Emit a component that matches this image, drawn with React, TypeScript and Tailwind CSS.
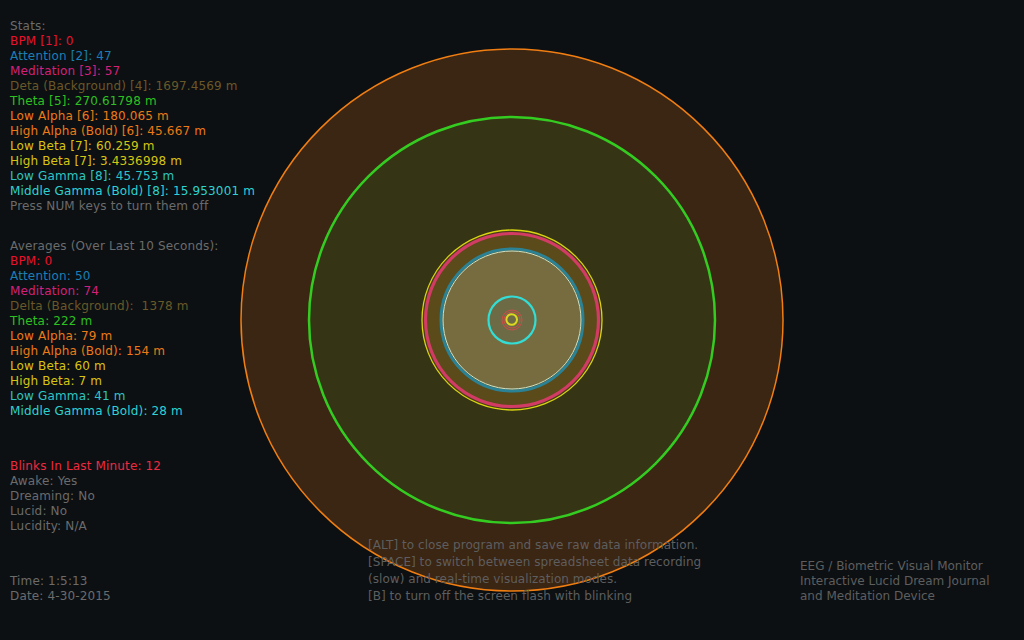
const lineFont = { fontFamily: '"DejaVu Sans", Verdana, sans-serif' };

type Line = { text: string; color: string };

const stats: Line[] = [
  { text: 'Stats:', color: 'text-[#6b6b6b]' },
  { text: 'BPM [1]: 0', color: 'text-[#e8102c]' },
  { text: 'Attention [2]: 47', color: 'text-[#1a7fb4]' },
  { text: 'Meditation [3]: 57', color: 'text-[#d2207c]' },
  { text: 'Deta (Background) [4]: 1697.4569 m', color: 'text-[#6a5828]' },
  { text: 'Theta [5]: 270.61798 m', color: 'text-[#2cc021]' },
  { text: 'Low Alpha [6]: 180.065 m', color: 'text-[#ec7a16]' },
  { text: 'High Alpha (Bold) [6]: 45.667 m', color: 'text-[#ec7a16]' },
  { text: 'Low Beta [7]: 60.259 m', color: 'text-[#d8c412]' },
  { text: 'High Beta [7]: 3.4336998 m', color: 'text-[#d8c412]' },
  { text: 'Low Gamma [8]: 45.753 m', color: 'text-[#2ec4c4]' },
  { text: 'Middle Gamma (Bold) [8]: 15.953001 m', color: 'text-[#2ed2d2]' },
  { text: 'Press NUM keys to turn them off', color: 'text-[#6b6b6b]' },
];

const averages: Line[] = [
  { text: 'Averages (Over Last 10 Seconds):', color: 'text-[#6b6b6b]' },
  { text: 'BPM: 0', color: 'text-[#e8102c]' },
  { text: 'Attention: 50', color: 'text-[#1a7fb4]' },
  { text: 'Meditation: 74', color: 'text-[#d2207c]' },
  { text: 'Delta (Background):  1378 m', color: 'text-[#6a5828]' },
  { text: 'Theta: 222 m', color: 'text-[#2cc021]' },
  { text: 'Low Alpha: 79 m', color: 'text-[#ec7a16]' },
  { text: 'High Alpha (Bold): 154 m', color: 'text-[#ec7a16]' },
  { text: 'Low Beta: 60 m', color: 'text-[#d8c412]' },
  { text: 'High Beta: 7 m', color: 'text-[#d8c412]' },
  { text: 'Low Gamma: 41 m', color: 'text-[#2ec4c4]' },
  { text: 'Middle Gamma (Bold): 28 m', color: 'text-[#2ed2d2]' },
];

const state: Line[] = [
  { text: 'Blinks In Last Minute: 12', color: 'text-[#ec2a40]' },
  { text: 'Awake: Yes', color: 'text-[#6b6b6b]' },
  { text: 'Dreaming: No', color: 'text-[#6b6b6b]' },
  { text: 'Lucid: No', color: 'text-[#6b6b6b]' },
  { text: 'Lucidity: N/A', color: 'text-[#6b6b6b]' },
];

function Block({ lines, className = '' }: { lines: Line[]; className?: string }) {
  return (
    <div className={className}>
      {lines.map((l, i) => (
        <p key={i} className={`${l.color} whitespace-pre`}>{l.text}</p>
      ))}
    </div>
  );
}

function Rings() {
  const cx = 512;
  const cy = 320;
  return (
    <svg className="absolute inset-0" width="1024" height="640" viewBox="0 0 1024 640">
      <circle cx={cx} cy={cy} r={271} fill="#3b2513" stroke="#f07e12" strokeWidth={1.5} />
      <circle cx={cx} cy={cy} r={203} fill="#353515" stroke="#35cc22" strokeWidth={2.5} />
      <circle cx={cx} cy={cy} r={90} fill="#4a3c18" stroke="#d8d412" strokeWidth={1.3} />
      <circle cx={cx} cy={cy} r={86.5} fill="#5b4a1a" stroke="#d23c64" strokeWidth={3.2} />
      <circle cx={cx} cy={cy} r={71} fill="none" stroke="#2b8294" strokeWidth={3} />
      <circle cx={cx} cy={cy} r={69} fill="#776c3f" stroke="#cfe4c8" strokeWidth={1} />
      <circle cx={cx} cy={cy} r={23.5} fill="#6d6b46" stroke="#33dcd4" strokeWidth={2.2} />
      <circle cx={cx} cy={cy} r={10} fill="none" stroke="#e04848" strokeWidth={0.8} />
      <circle cx={cx} cy={cy} r={8} fill="none" stroke="#e04848" strokeWidth={0.8} />
      <circle cx={cx - 0.3} cy={cy - 0.5} r={5.3} fill="#6d6b46" stroke="#dcd820" strokeWidth={2} />
    </svg>
  );
}

export default function App() {
  return (
    <div className="relative w-[1024px] h-[640px] overflow-hidden bg-[#0c1013] text-[12px] leading-[15px]" style={lineFont}>
      <Rings />
      <div className="relative flex h-full">
        <div className="w-[368px] pl-[10px] pt-[19px] flex flex-col tracking-[0.15px]">
          <Block lines={stats} />
          <Block lines={averages} className="mt-[25px]" />
          <Block lines={state} className="mt-[40px]" />
          <div className="mt-[40px] text-[#6b6b6b]">
            <p>Time: 1:5:13</p>
            <p>Date: 4-30-2015</p>
          </div>
        </div>
        <div className="w-[422px] flex flex-col justify-end pb-[35px] leading-[17px] text-[#5e5e5e] tracking-[0.05px]">
          <p>[ALT] to close program and save raw data information.</p>
          <p>[SPACE] to switch between spreadsheet data recording</p>
          <p>(slow) and real-time visualization modes.</p>
          <p>[B] to turn off the screen flash with blinking</p>
        </div>
        <div className="flex-1 flex flex-col justify-end pb-[36px] pl-[10px] text-[#5e5e5e]">
          <p>EEG / Biometric Visual Monitor</p>
          <p>Interactive Lucid Dream Journal</p>
          <p>and Meditation Device</p>
        </div>
      </div>
    </div>
  );
}
